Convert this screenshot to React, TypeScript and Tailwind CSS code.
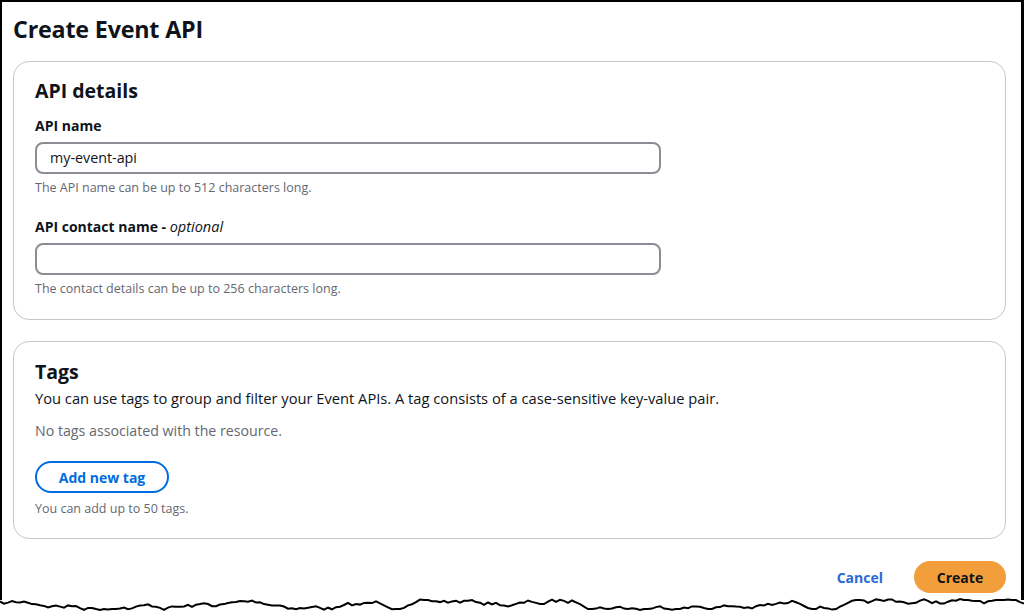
import React from "react";

function tornPoints(): string {
  const pts: string[] = [];
  let seed = 7;
  const rnd = () => {
    seed = (seed * 16807) % 2147483647;
    return (seed - 1) / 2147483646;
  };
  let y = 604;
  for (let x = 0; x <= 1024; x += 4) {
    y += (rnd() - 0.5) * 5;
    if (y < 599) y = 600;
    if (y > 610) y = 609;
    pts.push(`${x},${y.toFixed(1)}`);
  }
  return pts.join(" ");
}

const font = { fontFamily: '"Open Sans", "Noto Sans", Arial, sans-serif' };

export default function App() {
  const torn = tornPoints();
  return (
    <div
      className="relative w-[1024px] h-[613px] overflow-hidden bg-white text-[#0f141a]"
      style={font}
    >
      <div className="flex h-[600px] flex-col border-l-[2px] border-t-[2px] border-r-[3px] border-black pl-[11px] pr-[15px]">
        <h1 className="mt-[13px] text-[23.3px] font-bold leading-[28px] tracking-[-0.2px]">
          Create Event API
        </h1>

        <section className="mt-[18px] rounded-[16px] border border-[#c6c6cd] px-[21px] pt-[16px] pb-[22px]">
          <h2 className="text-[19.5px] font-bold leading-[26px]">API details</h2>
          <div className="mt-[12px] flex flex-col">
            <label className="text-[14px] font-bold leading-[20px]">API name</label>
            <div className="mt-[6px] flex h-[32px] w-[626px] items-center rounded-[8px] border-2 border-[#8c8c94] px-[13px] text-[14.3px]">
              my-event-api
            </div>
            <p className="mt-[6px] text-[12.5px] leading-[16px] text-[#656871]">
              The API name can be up to 512 characters long.
            </p>
          </div>
          <div className="mt-[21px] flex flex-col">
            <label className="text-[14px] font-bold leading-[20px]">
              API contact name - <i className="font-normal text-[14.5px]">optional</i>
            </label>
            <div className="mt-[6px] h-[32px] w-[626px] rounded-[8px] border-2 border-[#8c8c94]" />
            <p className="mt-[6px] text-[12.5px] leading-[16px] text-[#656871]">
              The contact details can be up to 256 characters long.
            </p>
          </div>
        </section>

        <section className="mt-[21px] rounded-[16px] border border-[#c6c6cd] px-[21px] pt-[17px] pb-[21px]">
          <h2 className="text-[19.5px] font-bold leading-[26px]">Tags</h2>
          <p className="mt-[3px] text-[14.7px] leading-[20px]">
            You can use tags to group and filter your Event APIs. A tag consists of a case-sensitive key-value pair.
          </p>
          <p className="mt-[13px] text-[14.2px] leading-[20px] text-[#656871]">
            No tags associated with the resource.
          </p>
          <button className="mt-[20px] flex h-[32px] w-[134px] items-center justify-center rounded-full border-2 border-[#006ce0] text-[14px] font-bold text-[#006ce0]">
            Add new tag
          </button>
          <p className="mt-[8px] text-[12.5px] leading-[16px] text-[#656871]">
            You can add up to 50 tags.
          </p>
        </section>

        <div className="mt-[22px] flex items-center justify-end gap-[31px]">
          <span className="text-[14px] font-bold text-[#2a6ad8]">Cancel</span>
          <button className="flex h-[32px] w-[92px] items-center justify-center rounded-full bg-[#f29e3a] text-[14px] font-bold text-[#0f141a]">
            Create
          </button>
        </div>
      </div>

      <svg className="absolute left-0 top-0" width="1024" height="613" viewBox="0 0 1024 613">
        <polygon points={`0,596 ${torn} 1024,596 1024,613 0,613`} fill="white" />
        <polyline points={torn} fill="none" stroke="#000" strokeWidth="2" />
      </svg>
    </div>
  );
}
